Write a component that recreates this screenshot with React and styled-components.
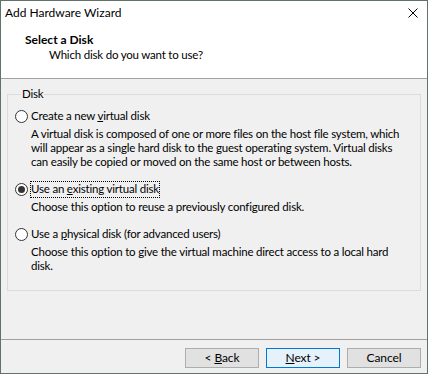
import React, { useState } from 'react'
import styled, { createGlobalStyle } from 'styled-components'

const GlobalStyle = createGlobalStyle`
  html, body {
    margin: 0;
    padding: 0;
    background: #ffffff;
  }
  body {
    font-family: Lato, "Liberation Sans", sans-serif;
    font-size: 11.5px;
    letter-spacing: -0.2px;
    color: #000;
  }
`

const Window = styled.div`
  width: 428px;
  height: 374px;
  box-sizing: border-box;
  border: 1px solid #5f7466;
  background: #f0f0f0;
  display: flex;
  flex-direction: column;
`

const TitleBar = styled.div`
  height: 24px;
  flex: none;
  background: #fff;
  display: flex;
  align-items: center;
  justify-content: space-between;
  padding: 0 9px 0 4px;
  line-height: 14px;
  font-size: 12px;
  letter-spacing: 0;
`

const CloseButton = styled.span`
  display: flex;
  width: 10px;
  height: 10px;
`

const Header = styled.div`
  height: 54px;
  flex: none;
  box-sizing: border-box;
  background: #fff;
  border-bottom: 1px solid #a0a0a0;
  padding: 8px 0 0 24px;
  line-height: 14px;
`

const HeaderTitle = styled.div`
  font-weight: bold;
  font-size: 12px;
  letter-spacing: 0;
`

const HeaderSubtitle = styled.div`
  margin: 1px 0 0 24px;
`

const Body = styled.div`
  flex: 1;
  padding: 8px 6px 0 6px;
`

const GroupBox = styled.fieldset`
  margin: 0;
  height: 204px;
  box-sizing: border-box;
  border: 1px solid #dcdcdc;
  padding: 8px 7px 0 7px;
`

const Legend = styled.legend`
  padding: 0 1px;
  margin-left: 6px;
  line-height: 14px;
`

const Option = styled.div`
  margin-bottom: 13px;
`

const RadioRow = styled.label`
  display: flex;
  align-items: center;
  height: 14px;
  cursor: default;
`

const RadioCircle = styled.span`
  width: 13px;
  height: 13px;
  box-sizing: border-box;
  border: 1px solid #333;
  border-radius: 50%;
  background: #fff;
  display: flex;
  align-items: center;
  justify-content: center;
  flex: none;

  &::after {
    content: '';
    width: 7px;
    height: 7px;
    border-radius: 50%;
    background: #333;
    display: ${(p) => (p.$checked ? 'block' : 'none')};
  }
`

const RadioText = styled.span`
  margin-left: 2px;
  padding: 1px 1px 2px 1px;
  line-height: 14px;
  outline: ${(p) => (p.$focused ? '1px dotted #000' : 'none')};
  outline-offset: -1px;
`

const Description = styled.div`
  margin: 4px 0 0 16px;
  line-height: 14px;
`

const DescLine = styled.div`
  white-space: nowrap;
`

const Footer = styled.div`
  height: 34px;
  flex: none;
  box-sizing: border-box;
  border-top: 1px solid #a0a0a0;
  display: flex;
  justify-content: flex-end;
  gap: 7px;
  padding: 8px 6px 0 0;
`

const Button = styled.button`
  width: 74px;
  height: 20px;
  box-sizing: border-box;
  margin: 0;
  padding: 0;
  font-family: inherit;
  font-size: 12px;
  letter-spacing: -0.1px;
  color: #000;
  background: ${(p) => (p.$default ? '#e5f1fb' : '#e1e1e1')};
  border: 1px solid ${(p) => (p.$default ? '#0078d7' : '#adadad')};
  line-height: 16px;
`

const options = [
  {
    id: 'new',
    label: <>Create a new <u>v</u>irtual disk</>,
    desc: [
      'A virtual disk is composed of one or more files on the host file system, which',
      'will appear as a single hard disk to the guest operating system. Virtual disks',
      'can easily be copied or moved on the same host or between hosts.',
    ],
  },
  {
    id: 'existing',
    label: <>Use an <u>e</u>xisting virtual disk</>,
    desc: ['Choose this option to reuse a previously configured disk.'],
  },
  {
    id: 'physical',
    label: <>Use a <u>p</u>hysical disk (for advanced users)</>,
    desc: [
      'Choose this option to give the virtual machine direct access to a local hard',
      'disk.',
    ],
  },
]

const App = () => {
  const [selected, setSelected] = useState('existing')

  return (
    <>
      <GlobalStyle />
      <Window>
        <TitleBar>
          <span>Add Hardware Wizard</span>
          <CloseButton>
            <svg width="10" height="10" viewBox="0 0 10 10">
              <path d="M0.5 0.5 L9.5 9.5 M9.5 0.5 L0.5 9.5" stroke="#000" strokeWidth="1" />
            </svg>
          </CloseButton>
        </TitleBar>
        <Header>
          <HeaderTitle>Select a Disk</HeaderTitle>
          <HeaderSubtitle>Which disk do you want to use?</HeaderSubtitle>
        </Header>
        <Body>
          <GroupBox>
            <Legend>Disk</Legend>
            {options.map((o) => (
              <Option key={o.id}>
                <RadioRow onClick={() => setSelected(o.id)}>
                  <RadioCircle $checked={selected === o.id} />
                  <RadioText $focused={selected === o.id}>{o.label}</RadioText>
                </RadioRow>
                <Description>
                  {o.desc.map((line) => (
                    <DescLine key={line}>{line}</DescLine>
                  ))}
                </Description>
              </Option>
            ))}
          </GroupBox>
        </Body>
        <Footer>
          <Button>&lt; <u>B</u>ack</Button>
          <Button $default><u>N</u>ext &gt;</Button>
          <Button>Cancel</Button>
        </Footer>
      </Window>
    </>
  )
}

export default App
